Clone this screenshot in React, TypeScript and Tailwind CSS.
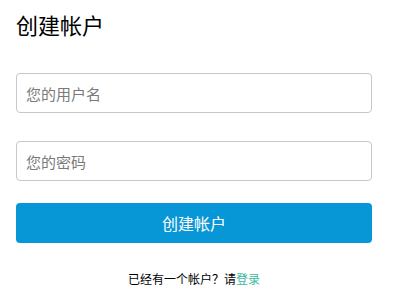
import React from 'react';

const font = { fontFamily: '"Noto Sans CJK SC", "Liberation Sans", sans-serif' };

export default function App() {
  return (
    <div className="pl-4 pt-[9px] bg-white min-h-screen" style={font}>
      <div className="w-[356px]">
        <h1 className="text-[22px] leading-[30px] text-black">创建帐户</h1>

        <form className="mt-[34px] flex flex-col">
          <input
            type="text"
            placeholder="您的用户名"
            className="h-10 w-full rounded border border-[#c8c8c8] px-[9px] text-[15px] placeholder:text-[#7a7a7a] outline-none"
          />
          <input
            type="password"
            placeholder="您的密码"
            className="mt-7 h-10 w-full rounded border border-[#c8c8c8] px-[9px] text-[15px] placeholder:text-[#7a7a7a] outline-none"
          />
          <button
            type="button"
            className="mt-[22px] h-10 w-full rounded bg-[#0796d6] text-[16px] text-white"
          >
            创建帐户
          </button>
        </form>

        <p className="mt-[27px] text-center text-[12px] text-black">
          已经有一个帐户？请<a className="text-[#3bb9a0]">登录</a>
        </p>
      </div>
    </div>
  );
}
